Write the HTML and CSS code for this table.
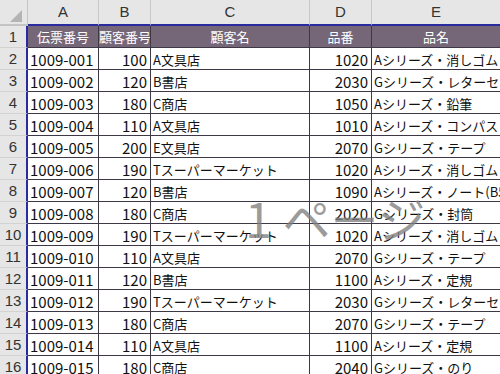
FILE: index.html
```html
<!DOCTYPE html>
<html lang="ja">
<head>
<meta charset="utf-8">
<title>Sheet</title>
<link rel="stylesheet" href="styles.css">
</head>
<body>
<div class="sheet">
  <div class="corner"><svg width="27" height="24" viewBox="0 0 27 24"><polygon points="22,10 22,22 10,22" fill="#b4b4b4"/></svg></div>
  <div class="ch">A</div><div class="ch">B</div><div class="ch">C</div><div class="ch">D</div><div class="ch last">E</div>

  <div class="rh">1</div><div class="hd">伝票番号</div><div class="hd">顧客番号</div><div class="hd">顧客名</div><div class="hd">品番</div><div class="hd last">品名</div>

  <div class="rh">2</div><div class="c n">1009-001</div><div class="c n r">100</div><div class="c">A文具店</div><div class="c n r">1020</div><div class="c last">Aシリーズ・消しゴム</div>
  <div class="rh">3</div><div class="c n">1009-002</div><div class="c n r">120</div><div class="c">B書店</div><div class="c n r">2030</div><div class="c last">Gシリーズ・レターセット</div>
  <div class="rh">4</div><div class="c n">1009-003</div><div class="c n r">180</div><div class="c">C商店</div><div class="c n r">1050</div><div class="c last">Aシリーズ・鉛筆</div>
  <div class="rh">5</div><div class="c n">1009-004</div><div class="c n r">110</div><div class="c">A文具店</div><div class="c n r">1010</div><div class="c last">Aシリーズ・コンパス</div>
  <div class="rh">6</div><div class="c n">1009-005</div><div class="c n r">200</div><div class="c">E文具店</div><div class="c n r">2070</div><div class="c last">Gシリーズ・テープ</div>
  <div class="rh">7</div><div class="c n">1009-006</div><div class="c n r">190</div><div class="c">Tスーパーマーケット</div><div class="c n r">1020</div><div class="c last">Aシリーズ・消しゴム</div>
  <div class="rh">8</div><div class="c n">1009-007</div><div class="c n r">120</div><div class="c">B書店</div><div class="c n r">1090</div><div class="c last">Aシリーズ・ノート(B5)</div>
  <div class="rh">9</div><div class="c n">1009-008</div><div class="c n r">180</div><div class="c">C商店</div><div class="c n r">2020</div><div class="c last">Gシリーズ・封筒</div>
  <div class="rh">10</div><div class="c n">1009-009</div><div class="c n r">190</div><div class="c">Tスーパーマーケット</div><div class="c n r">1020</div><div class="c last">Aシリーズ・消しゴム</div>
  <div class="rh">11</div><div class="c n">1009-010</div><div class="c n r">110</div><div class="c">A文具店</div><div class="c n r">2070</div><div class="c last">Gシリーズ・テープ</div>
  <div class="rh">12</div><div class="c n">1009-011</div><div class="c n r">120</div><div class="c">B書店</div><div class="c n r">1100</div><div class="c last">Aシリーズ・定規</div>
  <div class="rh">13</div><div class="c n">1009-012</div><div class="c n r">190</div><div class="c">Tスーパーマーケット</div><div class="c n r">2030</div><div class="c last">Gシリーズ・レターセット</div>
  <div class="rh">14</div><div class="c n">1009-013</div><div class="c n r">180</div><div class="c">C商店</div><div class="c n r">2070</div><div class="c last">Gシリーズ・テープ</div>
  <div class="rh">15</div><div class="c n">1009-014</div><div class="c n r">110</div><div class="c">A文具店</div><div class="c n r">1100</div><div class="c last">Aシリーズ・定規</div>
  <div class="rh">16</div><div class="c n">1009-015</div><div class="c n r">180</div><div class="c">C商店</div><div class="c n r">2040</div><div class="c last">Gシリーズ・のり</div>

  <div class="watermark">1 ページ</div>
</div>
</body>
</html>
```
FILE: styles.css
```css
html, body {
  margin: 0;
  padding: 0;
}
body {
  width: 500px;
  height: 374px;
  overflow: hidden;
  background: #ffffff;
  font-family: "Noto Sans CJK JP", sans-serif;
}
.sheet {
  position: relative;
  display: grid;
  grid-template-columns: 28px 71px 52px 159px 62px 128px;
  grid-template-rows: 26px;
  grid-auto-rows: 22px;
  width: 500px;
  overflow: hidden;
}
.corner {
  background: #e6e6e6;
  border-right: 1px solid #c4c4c4;
  border-bottom: 2px solid #c4c4c4;
  box-sizing: border-box;
  overflow: hidden;
}
.corner svg {
  display: block;
}
.ch {
  background: #e6e6e6;
  border-right: 1px solid #c8c8c8;
  border-bottom: 2px solid #2b2ba0;
  box-sizing: border-box;
  color: #333333;
  font-family: "Liberation Sans", "Noto Sans CJK JP", sans-serif;
  font-size: 15px;
  line-height: 24px;
  text-align: center;
}
.rh {
  background: #e6e6e6;
  border-right: 2px solid #2b2ba0;
  border-bottom: 1px solid #d2d2d2;
  box-sizing: border-box;
  color: #333333;
  font-family: "Liberation Sans", "Noto Sans CJK JP", sans-serif;
  font-size: 15px;
  line-height: 22px;
  text-align: center;
}
.hd {
  background: #766778;
  color: #ffffff;
  border-right: 1px solid #3e3846;
  border-bottom: 1px solid #3e3846;
  box-sizing: border-box;
  font-size: 13px;
  line-height: 21px;
  text-align: center;
  white-space: nowrap;
  overflow: hidden;
}
.c {
  border-right: 1px solid #3e3846;
  border-bottom: 1px solid #3e3846;
  box-sizing: border-box;
  color: #111111;
  font-size: 13px;
  line-height: 21px;
  padding: 1px 2px 0 2px;
  white-space: nowrap;
  overflow: hidden;
}
.last {
  border-right: none;
}
.n {
  font-family: "Liberation Sans Narrow", "Noto Sans CJK JP", sans-serif;
  font-size: 15px;
}
.r {
  text-align: right;
  padding-right: 3px;
}
.watermark {
  position: absolute;
  left: 245px;
  top: 193px;
  font-size: 48px;
  line-height: 48px;
  font-weight: 400;
  color: rgba(128, 128, 128, 0.8);
  white-space: nowrap;
  pointer-events: none;
}
```
